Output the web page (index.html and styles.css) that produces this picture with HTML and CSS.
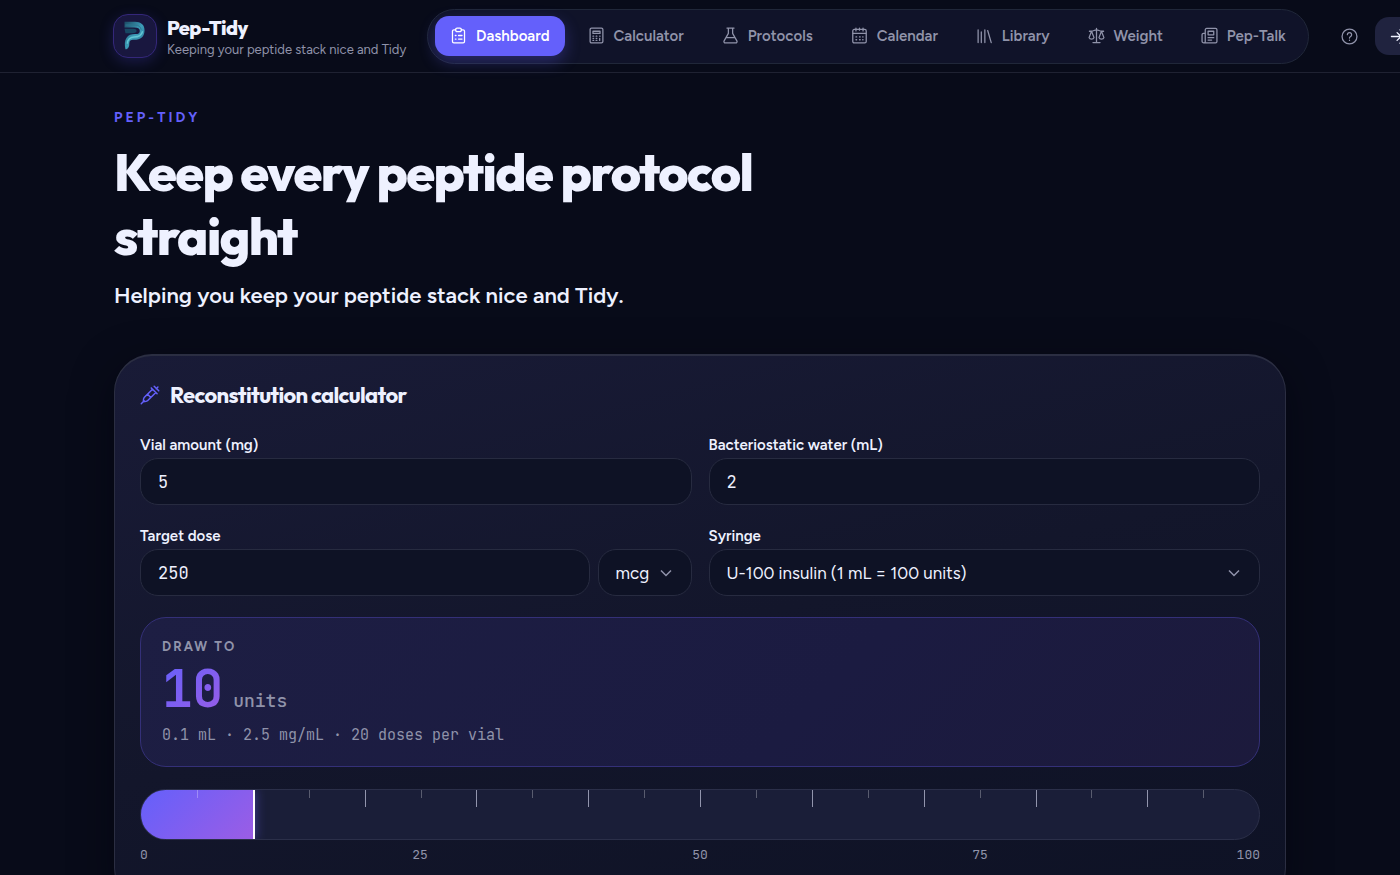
FILE: index.html
```html
<!DOCTYPE html>
<html lang="en">
<head>
    <meta charset="utf-8">
    <meta name="viewport" content="width=device-width, initial-scale=1">
    <title>Pep-Tidy</title>
    <link rel="stylesheet" href="styles.css">
</head>
<body>
    <header class="site-header">
        <div class="header-inner">
            <a href="#" class="brand">
                <span class="brand-logo">
                    <svg viewBox="0 0 44 44" aria-hidden="true">
                        <defs>
                            <linearGradient id="logoFill" x1="0" y1="0" x2="1" y2="1">
                                <stop offset="0" stop-color="#1b4a63"/>
                                <stop offset=".5" stop-color="#3c9cb8"/>
                                <stop offset="1" stop-color="#2a7595"/>
                            </linearGradient>
                        </defs>
                        <path d="M11 7h11c6 0 10 3 10 9 0 7-4 10-11 10-4 0-5 1-5 5 0 2-1 5-4 5-1-5-1-9 1-12 2-3 5-4 9-4 4 0 5-1 5-3.500S25 13 21 13H11z" fill="url(#logoFill)"/>
                        <path d="M11 14.500h9c3 0 4 1 3.500 2.500S22 19 19 19h-7z" fill="#174763"/>
                        <path d="M12 10.500h10c4 0 6 2 6.500 5" fill="none" stroke="#2e7690" stroke-width="1"/>
                        <path d="M14 30c0-4 3-7 7-7 5 0 8-2 9-6" fill="none" stroke="#63c6d4" stroke-width="1.500"/>
                    </svg>
                </span>
                <span class="brand-text">
                    <strong class="brand-name">Pep-Tidy</strong>
                    <span class="brand-tagline">Keeping your peptide stack nice and Tidy</span>
                </span>
            </a>

            <nav class="main-nav" aria-label="Main">
                <a href="#" class="nav-link active" aria-current="page">
                    <svg class="icon" viewBox="0 0 24 24"><path d="M8 4H5.500a2 2 0 0 0-2 2v14.500a2 2 0 0 0 2 2h13a2 2 0 0 0 2-2V6a2 2 0 0 0-2-2H16"/><rect x="8" y="1.500" width="8" height="5" rx="2"/><path d="M7.500 12h1M12 12h5M7.500 17h1M12 17h5"/></svg>
                    Dashboard
                </a>
                <a href="#" class="nav-link">
                    <svg class="icon" viewBox="0 0 24 24"><rect x="3" y="1.500" width="18" height="21" rx="2"/><path d="M7 6h10v3H7zM7 13h1M11.500 13h1M7 16h1M11.500 16h1M7 19h1M11.500 19h1M16.500 13h.5M16.500 16v3"/></svg>
                    Calculator
                </a>
                <a href="#" class="nav-link">
                    <svg class="icon" viewBox="0 0 24 24"><path d="M7 1.500h10M9 2v7L3 19.500a2 2 0 0 0 2 3h14a2 2 0 0 0 2-3L15 9V2M6 15h12"/></svg>
                    Protocols
                </a>
                <a href="#" class="nav-link">
                    <svg class="icon" viewBox="0 0 24 24"><rect x="2.500" y="3.500" width="19" height="19" rx="2"/><path d="M7 1.500v4M17 1.500v4M12 1.500v3M3 9h18M7 14h1M12 14h1M16.500 14h.5M7 18h1M12 18h1M16.500 18h.5"/></svg>
                    Calendar
                </a>
                <a href="#" class="nav-link">
                    <svg class="icon" viewBox="0 0 24 24"><path d="M3 4v18M7.500 7v15M12.500 4v18M16.500 5l5 17"/></svg>
                    Library
                </a>
                <a href="#" class="nav-link">
                    <svg class="icon" viewBox="0 0 24 24"><path d="M12 2v20M7 22h10M2 6h3c3 0 4-2 7-2s4 2 7 2h3M5 6L1.500 15c1 3 6 3 7 0zM19 6l-3.500 9c1 3 6 3 7 0z"/></svg>
                    Weight
                </a>
                <a href="#" class="nav-link">
                    <svg class="icon" viewBox="0 0 24 24"><path d="M6 20V4a2 2 0 0 1 2-2h12.500a2 2 0 0 1 2 2v16.500a2 2 0 0 1-2 2H4a2.500 2.500 0 0 1-2.500-2.500v-9a2 2 0 0 1 2-2H6M6 20a2 2 0 0 1-2 2.500M10 6h8v5h-8zM10 15h8M10 18.500h5"/></svg>
                    Pep-Talk
                </a>
            </nav>

            <div class="header-actions">
                <button type="button" class="help-button" aria-label="Help">
                    <svg class="icon" viewBox="0 0 24 24"><circle cx="12" cy="12" r="10.500"/><path d="M9 9.500a3 3 0 1 1 4.500 2.600c-1 .6-1.500 1-1.500 2M12 17.200v.3"/></svg>
                </button>
                <button type="button" class="signin-button" aria-label="Sign in">
                    <svg class="icon" viewBox="0 0 24 24"><path d="M2 12h13M10 6.500l5.500 5.500-5.500 5.500M14 2.500h6a2 2 0 0 1 2 2v15a2 2 0 0 1-2 2h-6"/></svg>
                </button>
            </div>
        </div>
    </header>

    <main class="container">
        <section class="hero">
            <p class="eyebrow">PEP-TIDY</p>
            <h1>Keep every peptide protocol straight</h1>
            <p class="lead">Helping you keep your peptide stack nice and Tidy.</p>
        </section>

        <section class="card">
            <h2 class="card-title">
                <svg class="icon" viewBox="0 0 24 24"><path d="M1.500 22.500l3.500-3.500M17 1.500L22.500 7M19.500 4.500l2-2M13.500 3.500l7 7M15 5L5 15c-1 1-1 3-1 5 2 0 4 0 5-1L19 9M9 11l4 4"/></svg>
                Reconstitution calculator
            </h2>

            <form class="calc-form">
                <div class="field">
                    <label for="vial">Vial amount (mg)</label>
                    <input type="text" inputmode="decimal" id="vial" value="5">
                </div>
                <div class="field">
                    <label for="water">Bacteriostatic water (mL)</label>
                    <input type="text" inputmode="decimal" id="water" value="2">
                </div>
                <div class="field">
                    <label for="dose">Target dose</label>
                    <div class="dose-row">
                        <input type="text" inputmode="decimal" id="dose" value="250">
                        <div class="select-wrap unit-select">
                            <select aria-label="Dose unit">
                                <option>mcg</option>
                                <option>mg</option>
                            </select>
                            <svg class="chevron" viewBox="0 0 12 12"><path d="M1 3.500l5 5 5-5"/></svg>
                        </div>
                    </div>
                </div>
                <div class="field">
                    <label for="syringe">Syringe</label>
                    <div class="select-wrap">
                        <select id="syringe">
                            <option>U-100 insulin (1 mL = 100 units)</option>
                        </select>
                        <svg class="chevron" viewBox="0 0 12 12"><path d="M1 3.500l5 5 5-5"/></svg>
                    </div>
                </div>
            </form>

            <div class="result">
                <p class="result-label">DRAW TO</p>
                <p class="result-value"><span class="result-number">10</span> <span class="result-unit">units</span></p>
                <p class="result-detail">0.1 mL · 2.5 mg/mL · 20 doses per vial</p>
            </div>

            <div class="barrel">
                <div class="barrel-fill" style="width: 10%"></div>
                <div class="barrel-ticks">
                    <i></i><i></i><i></i><i></i><i></i><i></i><i></i><i></i><i></i><i></i>
                    <i></i><i></i><i></i><i></i><i></i><i></i><i></i><i></i><i></i><i></i>
                </div>
            </div>
            <div class="scale">
                <span>0</span><span>25</span><span>50</span><span>75</span><span>100</span>
            </div>
        </section>
    </main>
</body>
</html>
```
FILE: styles.css
```css
:root {
    --bg: #080b19;
    --text: #eef1ff;
    --muted: #9093aa;
    --line: #272b40;
    --accent: #6460fb;
    --accent-2: #9b5de5;
    --sans: Figtree, Lato, sans-serif;
    --display: Outfit, Lato, sans-serif;
    --mono: "JetBrains Mono", "DejaVu Sans Mono", monospace;
}
* {
    box-sizing: border-box;
}
body {
    margin: 0;
    background-color: var(--bg);
    color: var(--text);
    font-family: var(--sans);
    font-size: 17px;
    overflow-x: hidden;
}
h1, h2, p {
    margin: 0;
}
a {
    color: inherit;
    text-decoration: none;
}
button, input, select {
    font: inherit;
    color: inherit;
}
.icon {
    flex: none;
    width: 17px;
    height: 17px;
    fill: none;
    stroke: currentColor;
    stroke-width: 1.8;
    stroke-linecap: round;
    stroke-linejoin: round;
}

/* Header */
.site-header {
    border-bottom: 1px solid #1f2232;
}
.header-inner, .container {
    width: calc(100% - 34px);
    max-width: 1172px;
    margin: 0 auto;
}
.header-inner {
    display: flex;
    align-items: center;
    max-width: 1174px;
    height: 72px;
}
.brand {
    display: flex;
    flex: none;
    align-items: center;
    gap: 10px;
    width: 314px;
}
.brand-logo {
    flex: none;
    width: 44px;
    height: 44px;
    border: 1px solid #34277a;
    border-radius: 15px;
    background-color: #19173f;
    box-shadow: 0 4px 14px rgba(80, 70, 220, 0.25);
}
.brand-logo svg {
    display: block;
}
.brand-text {
    display: flex;
    flex-direction: column;
    gap: 1px;
    padding-top: 4px;
    white-space: nowrap;
}
.brand-name {
    font-family: var(--display);
    font-size: 20px;
    font-weight: 800;
    line-height: 22px;
    letter-spacing: -0.03em;
}
.brand-tagline {
    color: var(--muted);
    font-size: 13px;
    line-height: 20px;
}
.main-nav {
    display: flex;
    flex: none;
    gap: 8px;
    padding: 6px 7px 7px;
    border: 1px solid #202739;
    border-radius: 28px;
    background-color: #101329;
}
.nav-link {
    display: flex;
    align-items: center;
    gap: 9px;
    height: 40px;
    padding: 0 15px;
    border-radius: 14px;
    color: var(--muted);
    font-size: 15px;
    font-weight: 600;
}
.nav-link.active {
    background-color: var(--accent);
    color: #fff;
    box-shadow: 0 6px 16px rgba(100, 96, 251, 0.3);
}
.header-actions {
    display: flex;
    flex: none;
    align-items: center;
    gap: 17px;
    margin-left: 32px;
}
.help-button {
    display: flex;
    padding: 0;
    border: none;
    background: none;
    color: var(--muted);
}
.signin-button {
    display: flex;
    flex: none;
    align-items: center;
    width: 48px;
    height: 38px;
    padding: 0 15px;
    border: none;
    border-radius: 14px;
    background-color: #20233f;
}

/* Hero */
.hero {
    padding-top: 33px;
}
.eyebrow {
    color: var(--accent);
    font-size: 14px;
    font-weight: 700;
    line-height: 24px;
    letter-spacing: 0.22em;
}
h1 {
    max-width: 700px;
    margin-top: 10px;
    font-family: var(--display);
    font-size: 52px;
    font-weight: 800;
    line-height: 64px;
    letter-spacing: -0.03em;
}
.lead {
    margin-top: 13px;
    font-size: 22px;
    font-weight: 600;
    line-height: 30px;
}

/* Calculator card */
.card {
    margin-top: 43px;
    padding: 24px 25px 40px;
    border: 1px solid #2b2e42;
    border-top-width: 2px;
    border-radius: 38px;
    background: linear-gradient(165deg, #191b37 0%, #13162b 50%, #0e1225 100%);
    box-shadow: 0 12px 40px rgba(0, 2, 12, 0.5);
}
.card-title {
    display: flex;
    align-items: center;
    gap: 10px;
    font-family: var(--display);
    font-size: 22px;
    font-weight: 700;
    line-height: 30px;
    letter-spacing: -0.03em;
}
.card-title .icon {
    width: 20px;
    height: 20px;
    color: var(--accent);
}
.calc-form {
    display: grid;
    grid-template-columns: 1fr 1fr;
    gap: 20px 17px;
    margin-top: 24px;
}
.field label {
    display: block;
    margin-bottom: 2px;
    font-size: 15px;
    font-weight: 600;
    line-height: 22px;
}
.field input, .field select {
    display: block;
    width: 100%;
    min-width: 0;
    height: 47px;
    padding: 0 17px;
    border: 1px solid var(--line);
    border-radius: 18px;
    background-color: #0e1225;
    outline: none;
}
.field input {
    font-family: var(--mono);
}
.field select {
    appearance: none;
}
.dose-row {
    display: flex;
    gap: 8px;
}
.dose-row input {
    flex: 1;
}
.select-wrap {
    position: relative;
}
.unit-select {
    flex: none;
    width: 94px;
}
.chevron {
    position: absolute;
    top: 18px;
    right: 20px;
    width: 12px;
    height: 12px;
    fill: none;
    stroke: var(--muted);
    stroke-width: 1.5;
    pointer-events: none;
}

/* Result */
.result {
    margin-top: 21px;
    padding: 18px 21px;
    border: 1px solid #343078;
    border-radius: 26px;
    background: linear-gradient(135deg, #1d1e43, #1b1b41 60%, #1c1a3c);
}
.result-label {
    color: var(--muted);
    font-size: 13px;
    font-weight: 700;
    line-height: 22px;
    letter-spacing: 0.16em;
}
.result-value {
    display: flex;
    align-items: baseline;
    gap: 10px;
    font-family: var(--mono);
}
.result-number {
    background: linear-gradient(135deg, var(--accent), var(--accent-2));
    background-clip: text;
    color: transparent;
    font-size: 51px;
    font-weight: 700;
    line-height: 62px;
}
.result-unit {
    color: var(--muted);
    font-size: 18px;
    font-weight: 500;
    line-height: 24px;
}
.result-detail {
    margin-top: 3px;
    color: var(--muted);
    font-family: var(--mono);
    font-size: 15px;
    line-height: 25px;
}

/* Syringe barrel */
.barrel {
    position: relative;
    height: 51px;
    margin-top: 22px;
    border: 1px solid #2b2f49;
    border-radius: 26px;
    background-color: #1a1e38;
    overflow: hidden;
}
.barrel-fill {
    box-sizing: content-box;
    height: 100%;
    border-right: 2px solid #fff;
    background: linear-gradient(135deg, var(--accent), var(--accent-2));
    box-shadow: 0 0 10px rgba(100, 96, 251, 0.5);
}
.barrel-ticks {
    position: absolute;
    inset: 0;
    display: flex;
}
.barrel-ticks i {
    flex: 1;
    height: 8px;
    border-left: 1px solid rgba(255, 255, 255, 0.28);
}
.barrel-ticks i:nth-child(odd) {
    height: 17px;
    border-color: #9295ad;
}
.barrel-ticks i:nth-child(1), .barrel-ticks i:nth-child(3) {
    border-color: transparent;
}
.scale {
    display: grid;
    grid-template-columns: 1fr 2fr 2fr 2fr 1fr;
    margin-top: 5px;
    color: var(--muted);
    font-family: var(--mono);
    font-size: 13px;
    line-height: 20px;
    text-align: center;
}
.scale span:first-child {
    text-align: left;
}
.scale span:last-child {
    text-align: right;
}
```
